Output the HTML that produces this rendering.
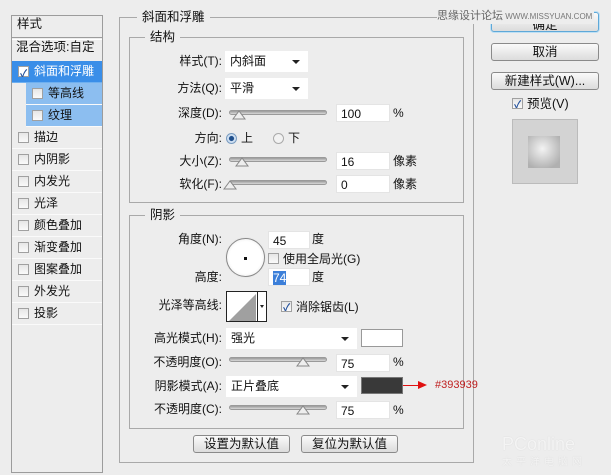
<!DOCTYPE html>
<html><head><meta charset="utf-8"><style>
*{box-sizing:border-box;margin:0;padding:0}
body{width:611px;height:475px;background:#ededed;position:relative;overflow:hidden;font-family:"Liberation Sans","Noto Sans CJK SC",sans-serif;font-size:12px;color:#111}
.a{position:absolute;white-space:nowrap;line-height:14px}
.box{position:absolute;border:1px solid #a9a9a9}
.r{position:absolute;left:12px;width:90px;height:22px;border-bottom:1px solid #fafafa;line-height:21px;padding-left:22px}
.cb{position:absolute;width:11px;height:11px;border:1px solid #a0a0a0;background:linear-gradient(#e6e6e6,#fafafa)}
.cbx{position:absolute;left:6px;top:5px}
.in{position:absolute;background:#fff;height:18px;line-height:18px;padding-left:4px;border:1px solid #e4e4e4}
.sel{position:absolute;background:#fff;height:21px;line-height:21px;padding-left:5px}
.sel:after{content:"";position:absolute;right:8px;top:9px;border:4px solid transparent;border-top:4px solid #222;border-bottom:0}
.tr{position:absolute;height:5px;width:98px;border-radius:3px;background:linear-gradient(#999,#d8d8d8);border:1px solid #9a9a9a}
.th{position:absolute;width:14px;height:10px}
.btn{position:absolute;border:1px solid #8a8a8a;border-radius:3px;background:linear-gradient(#fafafa,#dcdcdc);text-align:center;line-height:16px;font-size:12.5px}
.lg{position:absolute;background:#ededed;padding:0 5px;line-height:14px}
.lab{position:absolute;text-align:right;width:100px;line-height:14px}
.chk:after{content:"✓";position:absolute;left:1px;top:-3px;font-size:10px;color:#23509b;font-weight:bold}
</style></head><body>
<div class="box" style="left:11px;top:15px;width:92px;height:458px;border-color:#9c9c9c"></div>
<div class="a" style="left:17px;top:17px;font-size:12.5px">样式</div>
<div class="a" style="left:12px;top:37px;width:90px;border-top:1px solid #9c9c9c;height:3px;border-bottom:1px solid #fff"></div>
<div class="a" style="left:16px;top:40px;font-size:12.5px">混合选项:自定</div>
<div class="r" style="top:61px;background:#3a8ee8;color:#fff;border-bottom-color:#6fb0f0"><span class="cb cbx chk" style="background:#fff"></span>斜面和浮雕</div>
<div class="r" style="top:83px;left:26px;width:76px;background:#8cbef0"><span class="cb cbx"></span>等高线</div>
<div class="r" style="top:105px;left:26px;width:76px;background:#8cbef0"><span class="cb cbx"></span>纹理</div>
<div class="r" style="top:127px"><span class="cb cbx"></span>描边</div>
<div class="r" style="top:149px"><span class="cb cbx"></span>内阴影</div>
<div class="r" style="top:171px"><span class="cb cbx"></span>内发光</div>
<div class="r" style="top:193px"><span class="cb cbx"></span>光泽</div>
<div class="r" style="top:215px"><span class="cb cbx"></span>颜色叠加</div>
<div class="r" style="top:237px"><span class="cb cbx"></span>渐变叠加</div>
<div class="r" style="top:259px"><span class="cb cbx"></span>图案叠加</div>
<div class="r" style="top:281px"><span class="cb cbx"></span>外发光</div>
<div class="r" style="top:303px"><span class="cb cbx"></span>投影</div>

<div class="box" style="left:119px;top:17px;width:355px;height:446px"></div>
<div class="lg" style="left:137px;top:10px;font-size:12.5px">斜面和浮雕</div>
<div class="box" style="left:129px;top:37px;width:335px;height:166px"></div>
<div class="lg" style="left:145px;top:30px;font-size:12.5px">结构</div>

<div class="lab" style="left:122px;top:54px">样式(T):</div>
<div class="sel" style="left:225px;top:51px;width:83px">内斜面</div>
<div class="lab" style="left:122px;top:81px">方法(Q):</div>
<div class="sel" style="left:225px;top:78px;width:83px">平滑</div>
<div class="lab" style="left:122px;top:106px">深度(D):</div>
<div class="tr" style="left:229px;top:110px"></div>
<svg class="th" style="left:232px;top:110px"><polygon points="1,9 7,1 13,9" fill="#eee" stroke="#888"/></svg>
<div class="in" style="left:336px;top:104px;width:54px">100</div><div class="a" style="left:393px;top:106px">%</div>
<div class="lab" style="left:122px;top:131px">方向:</div>
<div class="a" style="left:226px;top:133px;width:11px;height:11px;border-radius:50%;border:1px solid #7a9cc0;background:radial-gradient(#1f4f8c 35%,#cfe0f2 45%)"></div>
<div class="a" style="left:241px;top:131px">上</div>
<div class="a" style="left:273px;top:133px;width:11px;height:11px;border-radius:50%;border:1px solid #aaa;background:#f2f2f2"></div>
<div class="a" style="left:288px;top:131px">下</div>
<div class="lab" style="left:122px;top:154px">大小(Z):</div>
<div class="tr" style="left:229px;top:157px"></div>
<svg class="th" style="left:235px;top:157px"><polygon points="1,9 7,1 13,9" fill="#eee" stroke="#888"/></svg>
<div class="in" style="left:336px;top:152px;width:54px">16</div><div class="a" style="left:393px;top:154px">像素</div>
<div class="lab" style="left:122px;top:177px">软化(F):</div>
<div class="tr" style="left:229px;top:180px"></div>
<svg class="th" style="left:223px;top:180px"><polygon points="1,9 7,1 13,9" fill="#eee" stroke="#888"/></svg>
<div class="in" style="left:336px;top:175px;width:54px">0</div><div class="a" style="left:393px;top:177px">像素</div>

<div class="box" style="left:129px;top:215px;width:335px;height:214px"></div>
<div class="lg" style="left:145px;top:208px;font-size:12.5px">阴影</div>
<div class="lab" style="left:122px;top:232px">角度(N):</div>
<div class="a" style="left:226px;top:238px;width:39px;height:39px;border-radius:50%;border:1px solid #888;background:radial-gradient(#fff 60%,#ddd);box-shadow:0 0 0 1px #e8e8e8"></div>
<div class="a" style="left:244px;top:257px;width:3px;height:3px;background:#111"></div>
<div class="in" style="left:268px;top:231px;width:42px">45</div><div class="a" style="left:312px;top:232px">度</div>
<div class="cb" style="left:268px;top:253px"></div><div class="a" style="left:283px;top:252px">使用全局光(G)</div>
<div class="lab" style="left:122px;top:270px">高度:</div>
<div class="in" style="left:268px;top:268px;width:42px"><span style="background:#3c7fd9;color:#fff">74</span></div><div class="a" style="left:312px;top:270px">度</div>
<div class="lab" style="left:122px;top:298px">光泽等高线:</div>
<div class="a" style="left:226px;top:291px;width:41px;height:31px;border:1px solid #222;background:#fff">
<svg width="39" height="29" style="position:absolute;left:0;top:0"><polygon points="2,29 29,2 29,29" fill="#a0a0a0"/><line x1="30.5" y1="0" x2="30.5" y2="29" stroke="#222"/><polygon points="33,13 37,13 35,16" fill="#222"/></svg></div>
<div class="cb chk" style="left:281px;top:301px"></div><div class="a" style="left:296px;top:300px">消除锯齿(L)</div>
<div class="lab" style="left:122px;top:331px">高光模式(H):</div>
<div class="sel" style="left:226px;top:328px;width:131px">强光</div>
<div class="a" style="left:361px;top:329px;width:42px;height:18px;border:1px solid #999;background:#fff"></div>
<div class="lab" style="left:122px;top:355px">不透明度(O):</div>
<div class="tr" style="left:229px;top:357px"></div>
<svg class="th" style="left:296px;top:357px"><polygon points="1,9 7,1 13,9" fill="#eee" stroke="#888"/></svg>
<div class="in" style="left:336px;top:354px;width:54px">75</div><div class="a" style="left:393px;top:355px">%</div>
<div class="lab" style="left:122px;top:379px">阴影模式(A):</div>
<div class="sel" style="left:226px;top:376px;width:131px">正片叠底</div>
<div class="a" style="left:361px;top:377px;width:42px;height:17px;border:1px solid #777;background:#393939"></div>
<div class="a" style="left:403px;top:385px;width:16px;height:1px;background:#e01010"></div>
<div class="a" style="left:418px;top:381px;border-left:9px solid #e01010;border-top:4px solid transparent;border-bottom:4px solid transparent;height:0"></div>
<div class="a" style="left:435px;top:378px;color:#c02020;font-size:11px">#393939</div>
<div class="lab" style="left:122px;top:402px">不透明度(C):</div>
<div class="tr" style="left:229px;top:405px"></div>
<svg class="th" style="left:296px;top:405px"><polygon points="1,9 7,1 13,9" fill="#eee" stroke="#888"/></svg>
<div class="in" style="left:336px;top:401px;width:54px">75</div><div class="a" style="left:393px;top:403px">%</div>

<div class="btn" style="left:193px;top:435px;width:97px;height:18px">设置为默认值</div>
<div class="btn" style="left:301px;top:435px;width:97px;height:18px">复位为默认值</div>

<div class="btn" style="left:491px;top:12px;width:108px;height:20px;border-color:#5ea8d8;box-shadow:0 0 0 1px #bfe0f4;line-height:24px">确定</div>
<div class="a" style="left:437px;top:9px;font-size:11px;color:#666;background:#ededed;padding-right:2px">思缘设计论坛<span style="font-size:8px;color:#777"> WWW.MISSYUAN.COM</span></div>
<div class="btn" style="left:491px;top:43px;width:108px;height:18px">取消</div>
<div class="btn" style="left:491px;top:72px;width:108px;height:18px">新建样式(W)...</div>
<div class="cb chk" style="left:512px;top:98px"></div><div class="a" style="left:527px;top:97px;font-size:12.5px">预览(V)</div>
<div class="a" style="left:512px;top:119px;width:66px;height:65px;border:1px solid #bbb;background:#d3d3d3"></div>
<div class="a" style="left:528px;top:136px;width:32px;height:32px;background:radial-gradient(circle at 45% 40%,#f3f3f3,#b0b0b0 80%)"></div>
<div class="a" style="left:502px;top:437px;font-size:18px;color:#f4f4f4;text-shadow:0 0 1px #d0d0d0">PConline</div>
<div class="a" style="left:502px;top:456px;font-size:10px;color:#f4f4f4;text-shadow:0 0 1px #d0d0d0;letter-spacing:4px">太平洋电脑网</div>
</body></html>
